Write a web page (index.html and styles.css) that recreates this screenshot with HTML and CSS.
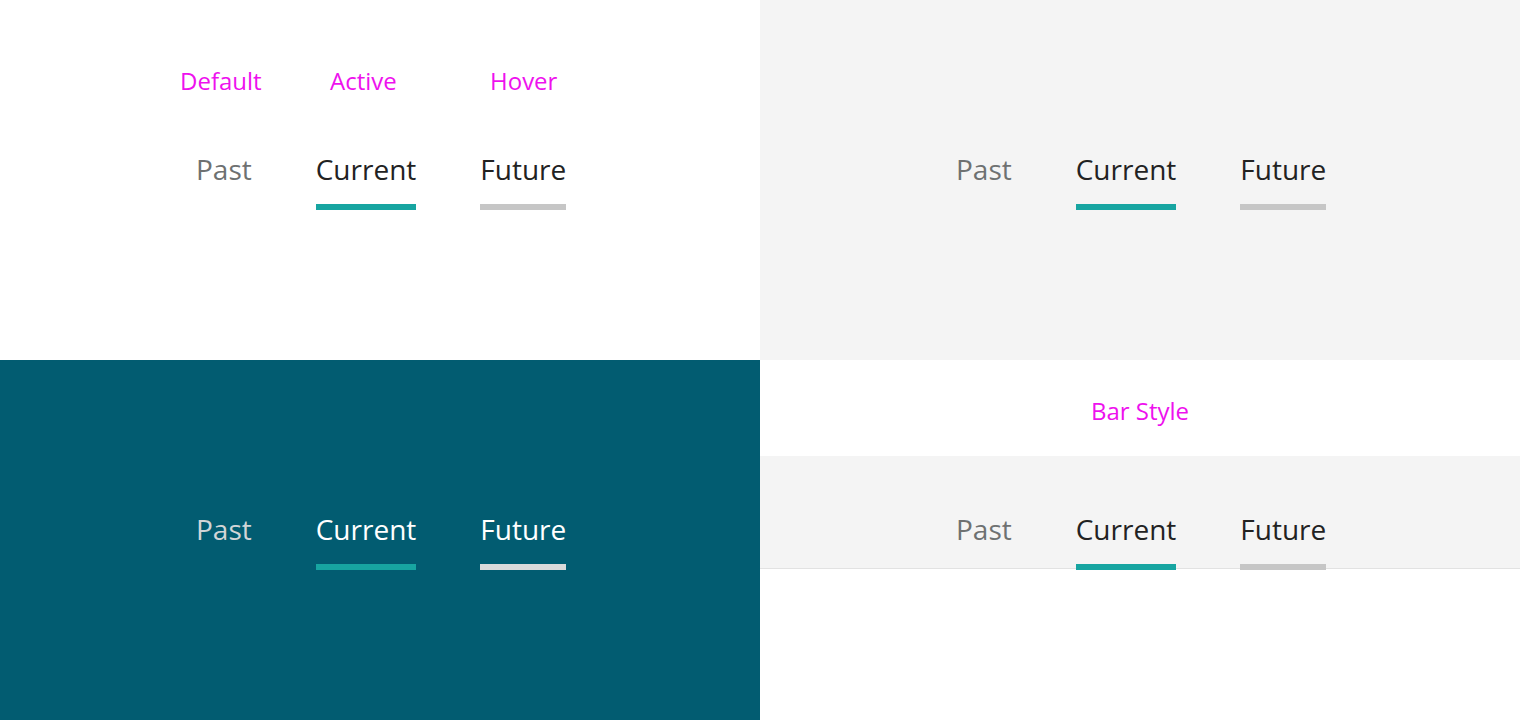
FILE: index.html
```html
<!DOCTYPE html>
<html>
<head>
<meta charset="utf-8">
<link rel="stylesheet" href="styles.css">
</head>
<body>
<div class="page">
  <section class="quad quad-white">
    <div class="labels">
      <span class="label">Default</span>
      <span class="label">Active</span>
      <span class="label">Hover</span>
    </div>
    <nav class="tabs">
      <div class="tab tab-past"><span class="tab-text">Past</span><span class="bar"></span></div>
      <div class="tab tab-current"><span class="tab-text">Current</span><span class="bar"></span></div>
      <div class="tab tab-future"><span class="tab-text">Future</span><span class="bar"></span></div>
    </nav>
  </section>
  <section class="quad quad-gray">
    <nav class="tabs">
      <div class="tab tab-past"><span class="tab-text">Past</span><span class="bar"></span></div>
      <div class="tab tab-current"><span class="tab-text">Current</span><span class="bar"></span></div>
      <div class="tab tab-future"><span class="tab-text">Future</span><span class="bar"></span></div>
    </nav>
  </section>
  <section class="quad quad-dark">
    <nav class="tabs">
      <div class="tab tab-past"><span class="tab-text">Past</span><span class="bar"></span></div>
      <div class="tab tab-current"><span class="tab-text">Current</span><span class="bar"></span></div>
      <div class="tab tab-future"><span class="tab-text">Future</span><span class="bar"></span></div>
    </nav>
  </section>
  <section class="quad quad-barstyle">
    <div class="bar-label"><span class="label">Bar Style</span></div>
    <div class="band">
      <nav class="tabs">
        <div class="tab tab-past"><span class="tab-text">Past</span><span class="bar"></span></div>
        <div class="tab tab-current"><span class="tab-text">Current</span><span class="bar"></span></div>
        <div class="tab tab-future"><span class="tab-text">Future</span><span class="bar"></span></div>
      </nav>
    </div>
  </section>
</div>
</body>
</html>
```
FILE: styles.css
```css
html, body {
  margin: 0;
  padding: 0;
}
body {
  font-family: "Open Sans", "Noto Sans", sans-serif;
  width: 1520px;
  height: 720px;
  overflow: hidden;
}
.page {
  display: grid;
  grid-template-columns: 760px 760px;
  grid-template-rows: 360px 360px;
}
.quad {
  box-sizing: border-box;
  display: flex;
  flex-direction: column;
}
.quad-white {
  background: #ffffff;
  padding-top: 63px;
}
.quad-gray {
  background: #f4f4f4;
  padding-top: 149px;
}
.quad-dark {
  background: #025c71;
  padding-top: 149px;
}
.quad-barstyle {
  background: #ffffff;
}
.labels {
  display: grid;
  grid-template-columns: 150px 160px auto;
  padding-left: 180px;
  height: 36px;
  margin-bottom: 50px;
}
.label {
  font-size: 24px;
  line-height: 36px;
  color: #ee11ee;
}
.tabs {
  display: flex;
  gap: 64px;
  padding-left: 196px;
}
.tab {
  display: flex;
  flex-direction: column;
}
.tab-text {
  font-size: 28px;
  line-height: 40px;
  color: #222222;
}
.bar {
  display: block;
  height: 6px;
  margin-top: 15px;
}
.tab-past .tab-text { color: #6e7171; }
.tab-past .bar { background: transparent; }
.tab-current .bar { background: #17a5a1; }
.tab-future .bar { background: #c6c6c6; }

.quad-dark .tab-past .tab-text { color: #d2d5d7; }
.quad-dark .tab-current .tab-text,
.quad-dark .tab-future .tab-text { color: #ffffff; }
.quad-dark .tab-future .bar { background: #dadada; }

.bar-label {
  height: 96px;
  box-sizing: border-box;
  padding-top: 33px;
  text-align: center;
}
.band {
  background: #f4f4f4;
  height: 112px;
  border-bottom: 1px solid #e2e2e2;
}
.band .tabs {
  padding-top: 53px;
}
```
